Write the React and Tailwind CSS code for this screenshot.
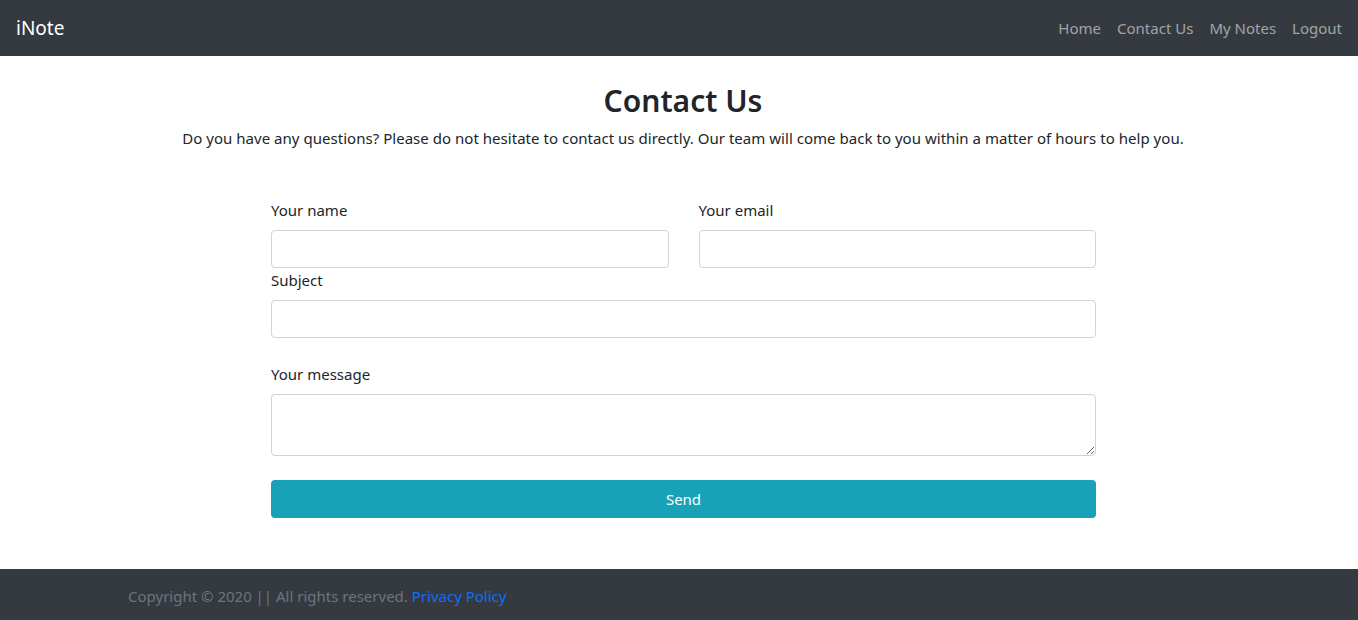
import React from "react";

const font = { fontFamily: '"Noto Sans", "Open Sans", sans-serif' };

function Navbar() {
  const links = ["Home", "Contact Us", "My Notes", "Logout"];
  return (
    <nav className="flex h-[56px] items-center justify-between bg-[#343a40] px-4">
      <a className="text-[19px] text-white" href="#">iNote</a>
      <ul className="flex gap-[16px]">
        {links.map((l) => (
          <li key={l}>
            <a className="text-[15px] text-[rgba(255,255,255,0.55)]" href="#">{l}</a>
          </li>
        ))}
      </ul>
    </nav>
  );
}

function Field({ label, textarea }) {
  return (
    <div>
      <label className="mb-2 block text-[15px] leading-[24px] text-[#212529]">{label}</label>
      {textarea ? (
        <textarea rows={2} className="block h-[62px] w-full rounded-[4px] border border-[#ced4da] px-3 py-1.5" />
      ) : (
        <input type="text" className="block h-[38px] w-full rounded-[4px] border border-[#ced4da] px-3" />
      )}
    </div>
  );
}

export default function App() {
  return (
    <div className="min-h-[620px] bg-white" style={font}>
      <Navbar />
      <section className="pl-[8px] pt-[26px] pb-[51px]">
        <h2 className="text-center text-[30px] font-semibold leading-[38px] text-[#212529]">Contact Us</h2>
        <p className="mt-[6px] text-center text-[15px] leading-[24px] tracking-[0.03px] text-[#212529]">
          Do you have any questions? Please do not hesitate to contact us directly. Our team will come back to you within a matter of hours to help you.
        </p>
        <form className="ml-[263px] mt-[48px] w-[825px]">
          <div className="grid grid-cols-2 gap-x-[30px]">
            <Field label="Your name" />
            <Field label="Your email" />
          </div>
          <Field label="Subject" />
          <div className="mt-6">
            <Field label="Your message" textarea />
          </div>
          <button type="button" className="mt-6 block h-[38px] w-full rounded-[4px] bg-[#17a2b8] text-[15px] text-white">
            Send
          </button>
        </form>
      </section>
      <footer className="flex h-[51px] items-center bg-[#343a40] pl-[128px] pt-1 text-[15px] text-[#6c757d]">
        <span>
          Copyright © 2020 || All rights reserved. <a href="#" className="text-[#0d6efd]">Privacy Policy</a>
        </span>
      </footer>
    </div>
  );
}
